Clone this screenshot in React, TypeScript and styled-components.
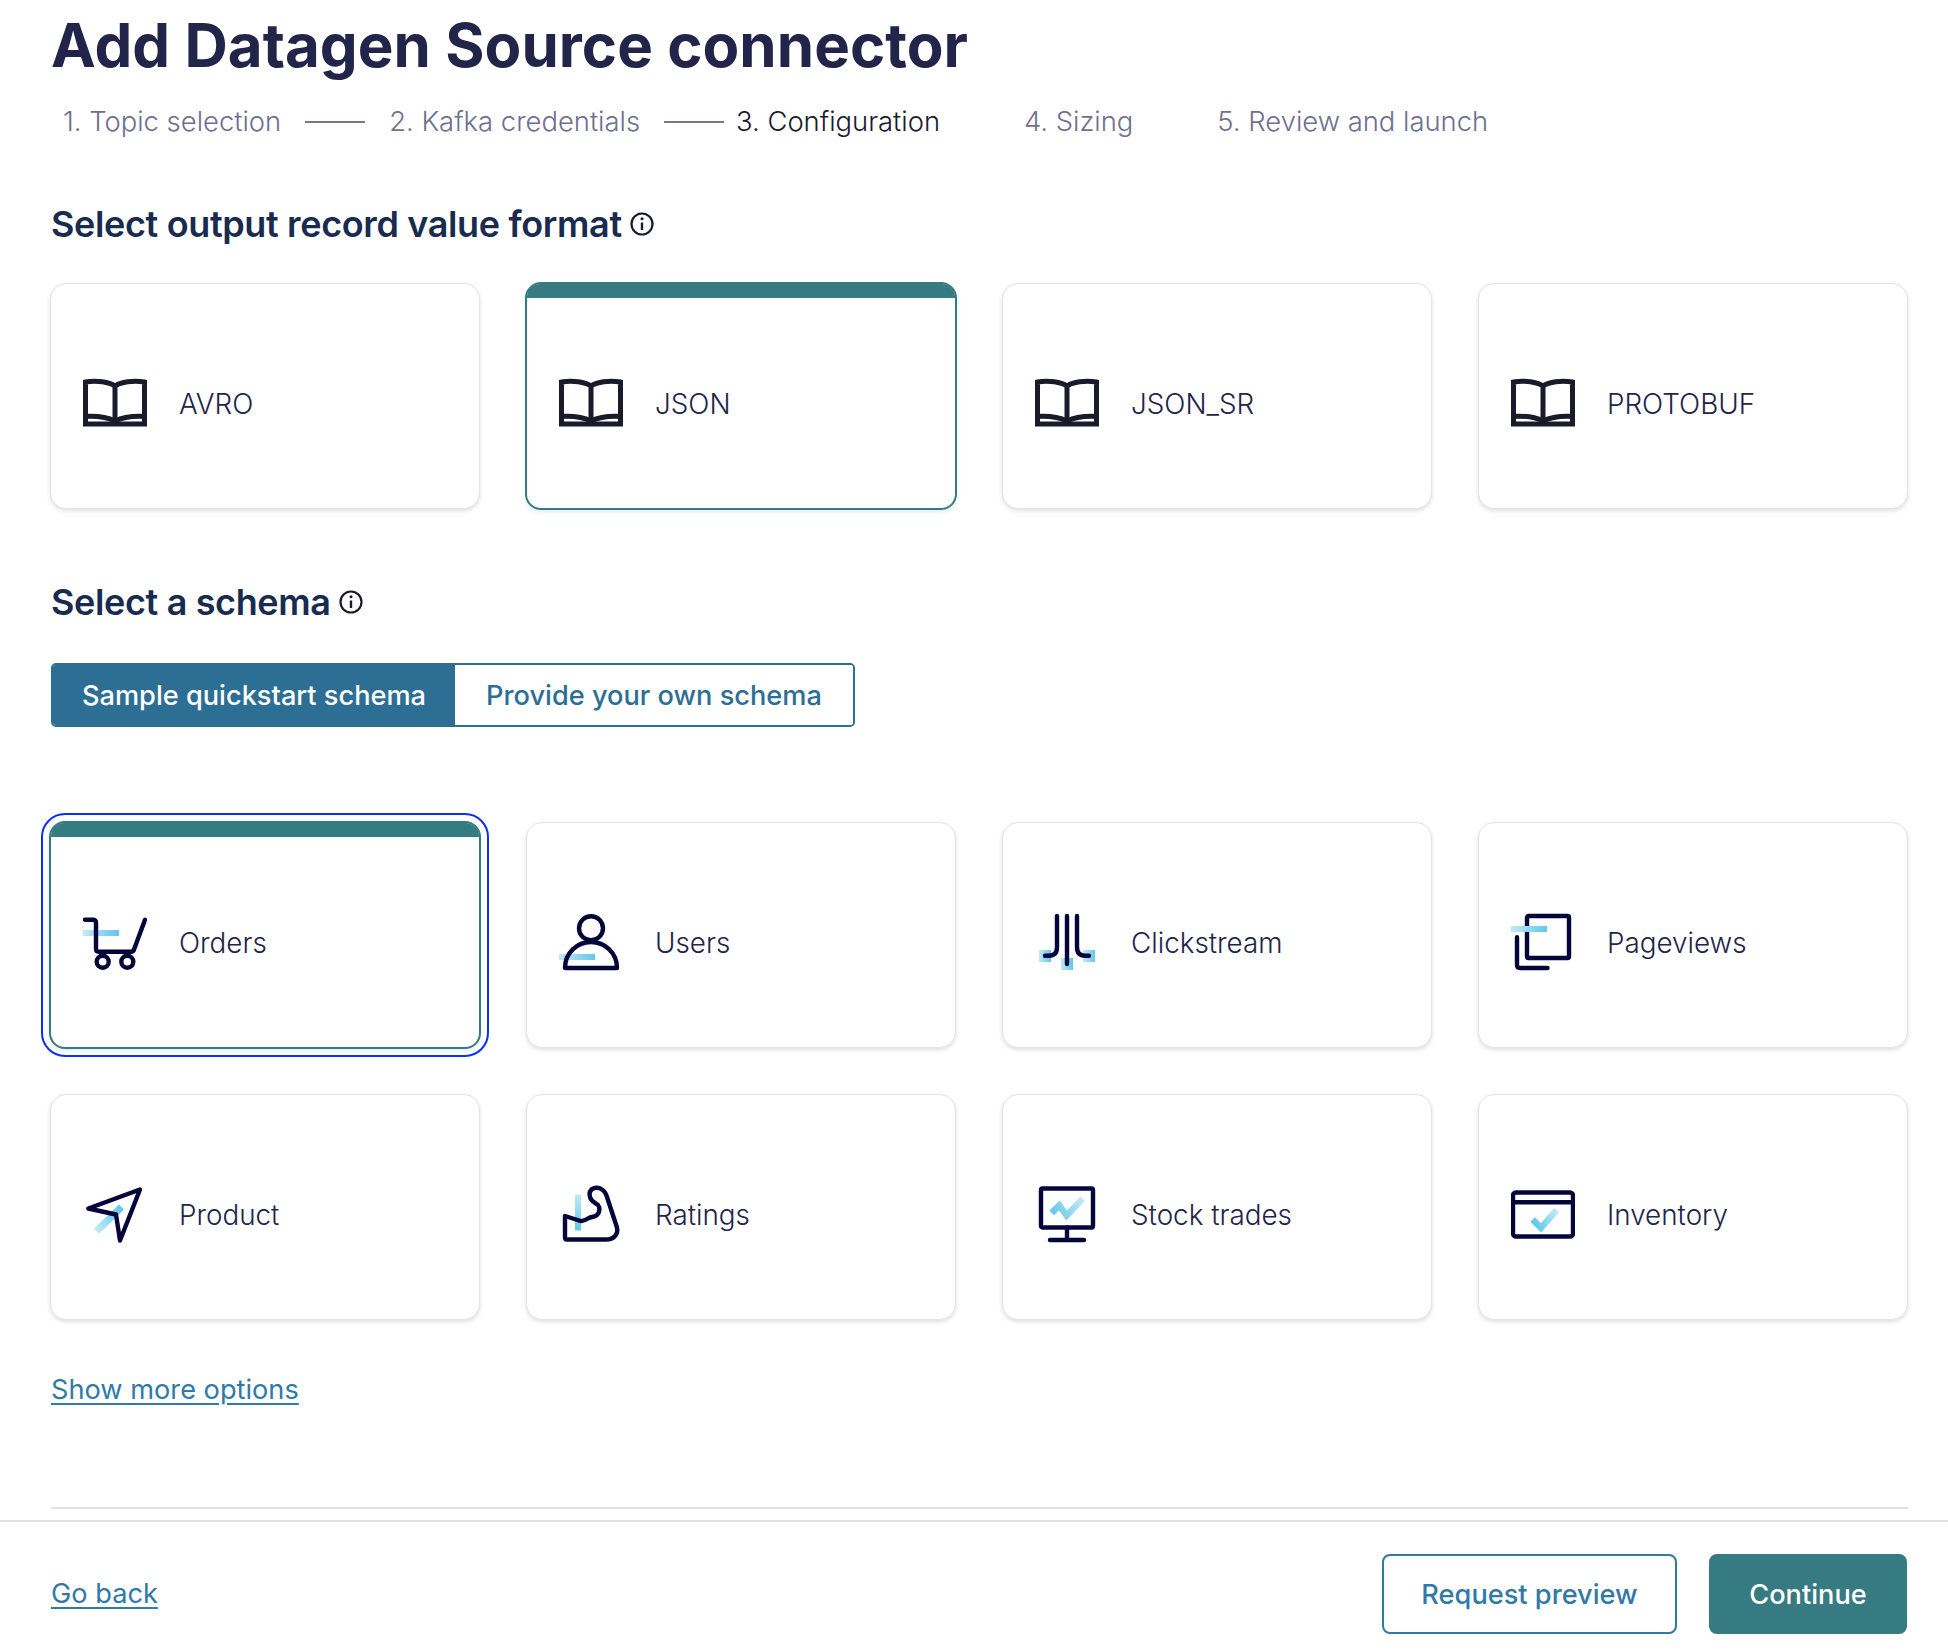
import React from "react";
import styled, { createGlobalStyle } from "styled-components";

const Global = createGlobalStyle`
  html, body { margin: 0; padding: 0; background: #fff; }
  body { font-family: Inter, "Liberation Sans", sans-serif; color: #22244a; }
  * { box-sizing: border-box; }
`;

const Page = styled.div`
  width: 1948px;
  height: 1652px;
  display: flex;
  flex-direction: column;
  overflow: hidden;
`;

const Content = styled.main`
  padding: 0 40px 0 51px;
  display: flex;
  flex-direction: column;
`;

const Title = styled.h1`
  margin: 0;
  height: 90px;
  line-height: 90px;
  font-size: 60px;
  font-weight: 700;
  letter-spacing: 0.04px;
  color: #22244a;
`;

const Stepper = styled.ol`
  list-style: none;
  display: flex;
  align-items: center;
  margin: 14px 0 0;
  padding: 0 0 0 12px;
  height: 36px;
`;

const Step = styled.li<{ $active?: boolean; $gap?: number }>`
  font-size: 27.4px;
  line-height: 34px;
  padding-bottom: 2px;
  white-space: nowrap;
  font-weight: 300;
  margin-left: ${(p) => p.$gap ?? 0}px;
  color: ${(p) => (p.$active ? "#1a1a2e" : "#6f7090")};
`;

const Connector = styled.li<{ $hidden?: boolean }>`
  width: 60px;
  height: 2px;
  margin-left: 24px;
  background: ${(p) => (p.$hidden ? "transparent" : "#77758f")};
`;

const SectionTitle = styled.h2<{ $top: number }>`
  display: flex;
  align-items: center;
  gap: 8px;
  margin: ${(p) => p.$top}px 0 0;
  height: 44px;
  font-size: 36px;
  line-height: 44px;
  font-weight: 600;
  letter-spacing: -0.36px;
  color: #1a2b50;
`;

const CardGrid = styled.div<{ $top: number }>`
  display: grid;
  grid-template-columns: repeat(4, 430px);
  grid-auto-rows: 226px;
  gap: 46px;
  margin: ${(p) => p.$top}px 0 0 -1px;
`;

const Card = styled.button<{ $selected?: boolean; $focused?: boolean }>`
  display: flex;
  flex-direction: column;
  padding: 0;
  margin: ${(p) => (p.$selected ? "-1px" : "0")};
  font: inherit;
  text-align: left;
  background: #fff;
  border-radius: 16px;
  overflow: visible;
  border: ${(p) => (p.$selected ? "2px solid #377b82" : "1px solid #e4e4e8")};
  box-shadow: ${(p) =>
    p.$selected ? "0 2px 4px rgba(55,123,130,.15)" : "0 2px 4px rgba(0,0,0,.12)"};
  outline: ${(p) => (p.$focused ? "2px solid #0a30f5" : "none")};
  outline-offset: 6px;
`;

const CardBand = styled.div<{ $selected?: boolean }>`
  flex: 0 0 14px;
  border-radius: 13px 13px 0 0;
  background: ${(p) => (p.$selected ? "#377b82" : "transparent")};
`;

const CardBody = styled.div`
  flex: 1;
  display: flex;
  align-items: center;
  gap: 32px;
  padding-left: 32px;
`;

const CardLabel = styled.span`
  font-size: 27.8px;
  font-weight: 300;
  padding-top: 2px;
  color: #22244a;
`;

const IconSvg = styled.svg`
  flex: none;
  width: 64px;
  height: 64px;
  fill: none;
  stroke: #04053a;
  stroke-width: 4.4;
  stroke-linecap: round;
  stroke-linejoin: round;
`;

const BookSvg = styled(IconSvg)`
  stroke: #1a1a2a;
  stroke-width: 5;
  stroke-linecap: butt;
  stroke-linejoin: miter;
`;

const Toggle = styled.div`
  display: flex;
  margin-top: 39px;
  width: 804px;
  height: 64px;
  border: 2px solid #2c6e94;
  border-radius: 5px;
  overflow: hidden;
`;

const ToggleOption = styled.button<{ $active?: boolean }>`
  flex: ${(p) => (p.$active ? "0 0 402px" : "1")};
  border: 0;
  padding: 0;
  font: inherit;
  font-size: 27.2px;
  font-weight: 500;
  background: ${(p) => (p.$active ? "#2c6e94" : "#fff")};
  color: ${(p) => (p.$active ? "#fff" : "#2c6e94")};
`;

const TextLink = styled.a`
  font-size: 27.2px;
  line-height: 36px;
  font-weight: 400;
  color: #2f7aa8;
  text-decoration: underline;
  text-underline-offset: 4px;
`;

const ShowMore = styled.div`
  margin-top: 52px;
  height: 36px;
`;

const Divider = styled.hr`
  margin: 99px 0 0;
  height: 2px;
  border: 0;
  background: #e0e0e6;
`;

const Footer = styled.footer`
  margin-top: 11px;
  border-top: 2px solid #e0e0e6;
  padding: 32px 41px 18px 51px;
  display: flex;
  align-items: center;
  justify-content: space-between;
`;

const FooterActions = styled.div`
  display: flex;
  gap: 32px;
`;

const ActionButton = styled.button<{ $primary?: boolean }>`
  height: 80px;
  width: ${(p) => (p.$primary ? 198 : 295)}px;
  padding: 0;
  border-radius: 8px;
  font: inherit;
  font-size: 27.2px;
  font-weight: 500;
  border: 2px solid ${(p) => (p.$primary ? "#377b82" : "#2f7aa8")};
  background: ${(p) => (p.$primary ? "#377b82" : "#fff")};
  color: ${(p) => (p.$primary ? "#fff" : "#2f7aa8")};
`;

const InfoSvg = styled.svg`
  width: 26px;
  height: 26px;
  margin-left: -1px;
  fill: none;
  stroke: #1a1a2e;
  stroke-width: 2.2;
`;

const Info = () => (
  <InfoSvg viewBox="0 0 26 26">
    <circle cx="13" cy="13" r="10.5" />
    <path d="M13 11.5V19" strokeWidth="2.4" />
    <circle cx="13" cy="7.8" r="1.5" fill="#1a1a2e" stroke="none" />
  </InfoSvg>
);

const Grad = ({ id, x1, y1, x2, y2 }: { id: string; x1: number; y1: number; x2: number; y2: number }) => (
  <defs>
    <linearGradient id={id} gradientUnits="userSpaceOnUse" x1={x1} y1={y1} x2={x2} y2={y2}>
      <stop offset="0" stopColor="#c2e9f6" />
      <stop offset="1" stopColor="#62c8e8" />
    </linearGradient>
  </defs>
);

const BookIcon = () => (
  <BookSvg viewBox="0 0 64 64">
    <path d="M32 15C26 11 14 9 2.5 11V53H61.5V11C50 9 38 11 32 15ZM32 15V52" />
    <path d="M0 45.5C12 44.5 24 46 32 50C40 46 52 44.5 64 45.5" />
  </BookSvg>
);

const CartIcon = () => (
  <IconSvg viewBox="0 0 64 64">
    <Grad id="g-cart" x1={0} y1={23} x2={36} y2={23} />
    <rect x="0" y="20" width="36" height="6" fill="url(#g-cart)" stroke="none" />
    <path d="M2 9.7H10Q13 9.7 13 13V39Q13 41.7 16 41.7H48Q50.3 41.7 51 39.5L62 9.7" />
    <circle cx="19.7" cy="51.7" r="6" />
    <circle cx="44.3" cy="51.7" r="6" />
  </IconSvg>
);

const UserIcon = () => (
  <IconSvg viewBox="0 0 64 64">
    <Grad id="g-user" x1={0} y1={47} x2={36} y2={47} />
    <rect x="0" y="44" width="36" height="6" fill="url(#g-user)" stroke="none" />
    <circle cx="32" cy="18.3" r="12" />
    <path d="M6 58C6 43 18 32 32 32C46 32 58 43 58 58Z" />
  </IconSvg>
);

const ClickstreamIcon = () => (
  <IconSvg viewBox="0 0 64 64">
    <Grad id="g-c1" x1={4} y1={46} x2={16} y2={46} />
    <Grad id="g-c2" x1={26} y1={54} x2={38} y2={54} />
    <Grad id="g-c3" x1={48} y1={46} x2={60} y2={46} />
    <rect x="4" y="40" width="12" height="12" fill="url(#g-c1)" stroke="none" />
    <rect x="26" y="48" width="12" height="12" fill="url(#g-c2)" stroke="none" />
    <rect x="48" y="40" width="12" height="12" fill="url(#g-c3)" stroke="none" />
    <path d="M32 6V54M22 6V37Q22 45.7 14 45.7H10M42 6V37Q42 45.7 50 45.7H54" />
  </IconSvg>
);

const PagesIcon = () => (
  <IconSvg viewBox="0 0 64 64">
    <Grad id="g-pages" x1={0} y1={19} x2={36} y2={19} />
    <rect x="16" y="6" width="42" height="42" rx="1.5" />
    <path d="M6 27.3V55Q6 58 9 58H36.5" />
    <rect x="0" y="16" width="36" height="6" fill="url(#g-pages)" stroke="none" />
  </IconSvg>
);

const PlaneIcon = () => (
  <IconSvg viewBox="0 0 64 64">
    <Grad id="g-plane" x1={15} y1={50} x2={39} y2={27} />
    <path d="M41 27.5L36 22.5L11 46.5L16 52Z" fill="url(#g-plane)" stroke="none" />
    <path d="M57 7.5L5.3 26.5L33 32.5L37 58.5Z" />
  </IconSvg>
);

const ArmIcon = () => (
  <IconSvg viewBox="0 0 64 64">
    <Grad id="g-arm" x1={19} y1={12.5} x2={19} y2={48.5} />
    <rect x="16" y="12.5" width="6" height="36" fill="url(#g-arm)" stroke="none" />
    <path d="M6 34V55.5Q6 57.5 8 57.5H47C55 57.5 59.5 52 58 45.5L48 15C46 8 41 5.5 37 5.8C32 6.3 29.5 10 31 15C32 19.5 36 20.5 39 23C41 25.5 41 30 38 33C35 35.5 32 34.5 29 36.5C26 38.5 23 39.8 20 38.5Z" />
  </IconSvg>
);

const MonitorIcon = () => (
  <IconSvg viewBox="0 0 64 64">
    <Grad id="g-mon" x1={48} y1={17} x2={16} y2={31} />
    <rect x="6" y="6.5" width="52" height="39" rx="1.5" />
    <path d="M32 45.5V58M15 58H49" />
    <path d="M16.7 30.8L24.3 23.5L31.7 33.5L47.7 16.8" stroke="url(#g-mon)" strokeWidth="6.5" strokeLinecap="butt" strokeLinejoin="miter" />
  </IconSvg>
);

const WindowIcon = () => (
  <IconSvg viewBox="0 0 64 64">
    <Grad id="g-win" x1={46} y1={28} x2={22} y2={40} />
    <rect x="2" y="10.5" width="60" height="44" rx="3" />
    <path d="M2 20.3H62" />
    <path d="M21.7 37.5L30 45.8L45.7 28.2" stroke="url(#g-win)" strokeWidth="6.5" strokeLinecap="butt" strokeLinejoin="miter" />
  </IconSvg>
);

type CardItem = { label: string; icon: React.ReactNode; selected?: boolean; focused?: boolean };

const formats: CardItem[] = [
  { label: "AVRO", icon: <BookIcon /> },
  { label: "JSON", icon: <BookIcon />, selected: true },
  { label: "JSON_SR", icon: <BookIcon /> },
  { label: "PROTOBUF", icon: <BookIcon /> },
];

const schemas: CardItem[] = [
  { label: "Orders", icon: <CartIcon />, selected: true, focused: true },
  { label: "Users", icon: <UserIcon /> },
  { label: "Clickstream", icon: <ClickstreamIcon /> },
  { label: "Pageviews", icon: <PagesIcon /> },
  { label: "Product", icon: <PlaneIcon /> },
  { label: "Ratings", icon: <ArmIcon /> },
  { label: "Stock trades", icon: <MonitorIcon /> },
  { label: "Inventory", icon: <WindowIcon /> },
];

const Tile = ({ item }: { item: CardItem }) => (
  <Card $selected={item.selected} $focused={item.focused}>
    <CardBand $selected={item.selected} />
    <CardBody>
      {item.icon}
      <CardLabel>{item.label}</CardLabel>
    </CardBody>
  </Card>
);

export default function App() {
  return (
    <Page>
      <Global />
      <Content>
        <Title>Add Datagen Source connector</Title>
        <Stepper>
          <Step>1. Topic selection</Step>
          <Connector />
          <Step $gap={24}>2. Kafka credentials</Step>
          <Connector />
          <Step $active $gap={12}>3. Configuration</Step>
          <Connector $hidden />
          <Step>4. Sizing</Step>
          <Connector $hidden />
          <Step>5. Review and launch</Step>
        </Stepper>
        <SectionTitle $top={62}>
          Select output record value format <Info />
        </SectionTitle>
        <CardGrid $top={37}>
          {formats.map((f) => (
            <Tile key={f.label} item={f} />
          ))}
        </CardGrid>
        <SectionTitle $top={71}>
          Select a schema <Info />
        </SectionTitle>
        <Toggle>
          <ToggleOption $active>Sample quickstart schema</ToggleOption>
          <ToggleOption>Provide your own schema</ToggleOption>
        </Toggle>
        <CardGrid $top={95}>
          {schemas.map((s) => (
            <Tile key={s.label} item={s} />
          ))}
        </CardGrid>
        <ShowMore>
          <TextLink href="#">Show more options</TextLink>
        </ShowMore>
        <Divider />
      </Content>
      <Footer>
        <TextLink href="#">Go back</TextLink>
        <FooterActions>
          <ActionButton>Request preview</ActionButton>
          <ActionButton $primary>Continue</ActionButton>
        </FooterActions>
      </Footer>
    </Page>
  );
}
